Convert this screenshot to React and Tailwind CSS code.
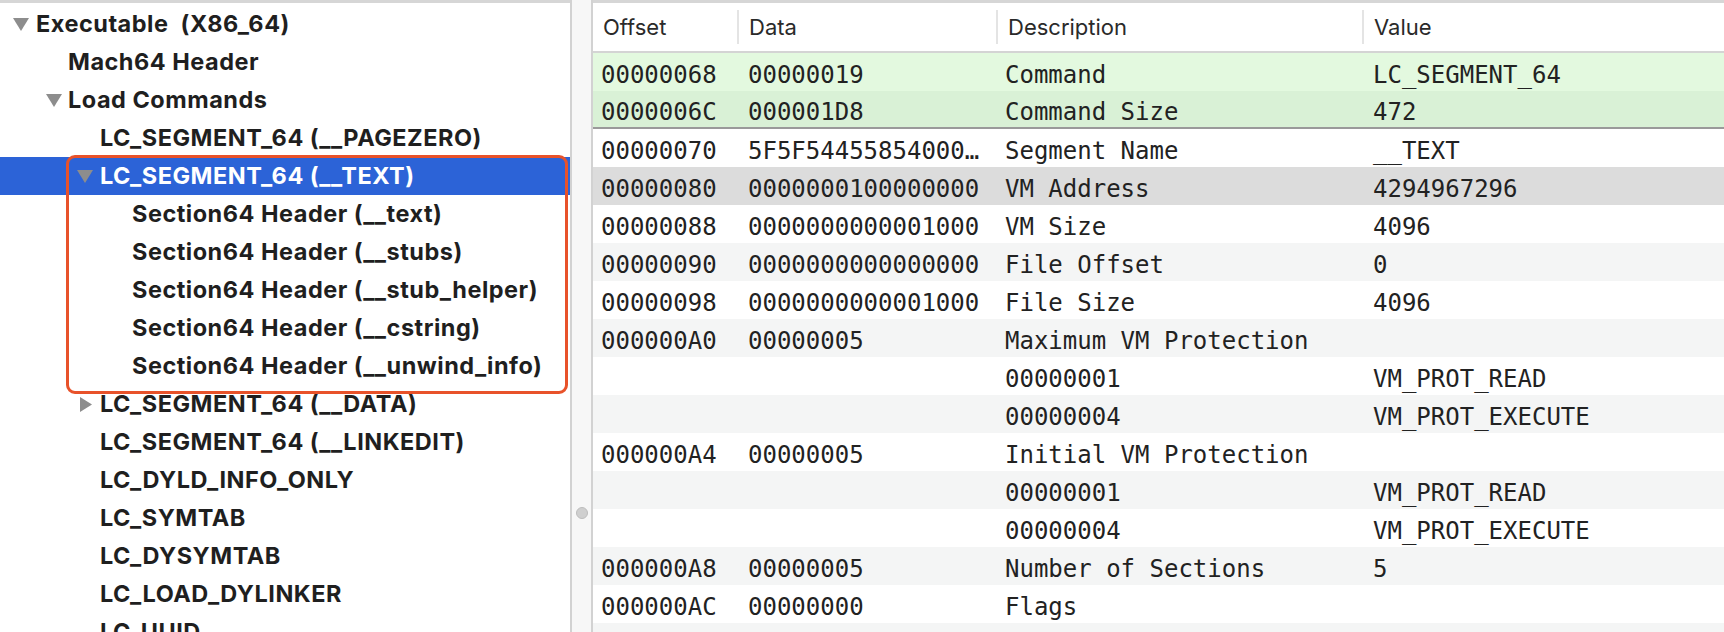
const tree = [
  { label: "Executable  (X86_64)", level: 0, toggle: "down" },
  { label: "Mach64 Header", level: 1 },
  { label: "Load Commands", level: 1, toggle: "down" },
  { label: "LC_SEGMENT_64 (__PAGEZERO)", level: 2 },
  { label: "LC_SEGMENT_64 (__TEXT)", level: 2, toggle: "down", selected: true },
  { label: "Section64 Header (__text)", level: 3 },
  { label: "Section64 Header (__stubs)", level: 3 },
  { label: "Section64 Header (__stub_helper)", level: 3 },
  { label: "Section64 Header (__cstring)", level: 3 },
  { label: "Section64 Header (__unwind_info)", level: 3 },
  { label: "LC_SEGMENT_64 (__DATA)", level: 2, toggle: "right" },
  { label: "LC_SEGMENT_64 (__LINKEDIT)", level: 2 },
  { label: "LC_DYLD_INFO_ONLY", level: 2 },
  { label: "LC_SYMTAB", level: 2 },
  { label: "LC_DYSYMTAB", level: 2 },
  { label: "LC_LOAD_DYLINKER", level: 2 },
  { label: "LC_UUID", level: 2 },
];

const rows = [
  { cells: ["00000068", "00000019", "Command", "LC_SEGMENT_64"], bg: "bg-[#e3f9df]" },
  { cells: ["0000006C", "000001D8", "Command Size", "472"], bg: "bg-[#d9f1d6] border-b-2 border-[#9a9a9a]" },
  { cells: ["00000070", "5F5F54455854000…", "Segment Name", "__TEXT"], bg: "bg-white" },
  { cells: ["00000080", "0000000100000000", "VM Address", "4294967296"], bg: "bg-[#dcdcdc]" },
  { cells: ["00000088", "0000000000001000", "VM Size", "4096"], bg: "bg-white" },
  { cells: ["00000090", "0000000000000000", "File Offset", "0"], bg: "bg-[#f4f5f5]" },
  { cells: ["00000098", "0000000000001000", "File Size", "4096"], bg: "bg-white" },
  { cells: ["000000A0", "00000005", "Maximum VM Protection", ""], bg: "bg-[#f4f5f5]" },
  { cells: ["", "", "00000001", "VM_PROT_READ"], bg: "bg-white" },
  { cells: ["", "", "00000004", "VM_PROT_EXECUTE"], bg: "bg-[#f4f5f5]" },
  { cells: ["000000A4", "00000005", "Initial VM Protection", ""], bg: "bg-white" },
  { cells: ["", "", "00000001", "VM_PROT_READ"], bg: "bg-[#f4f5f5]" },
  { cells: ["", "", "00000004", "VM_PROT_EXECUTE"], bg: "bg-white" },
  { cells: ["000000A8", "00000005", "Number of Sections", "5"], bg: "bg-[#f4f5f5]" },
  { cells: ["000000AC", "00000000", "Flags", ""], bg: "bg-white" },
  { cells: ["", "", "", ""], bg: "bg-[#f4f5f5]" },
];

const cols = ["w-[144px]", "w-[259px]", "w-[366px]", "flex-1"];

function Toggle({ dir }) {
  if (dir === "right") {
    return (
      <svg width="12" height="15" viewBox="0 0 12 15" className="shrink-0">
        <path d="M0 0 L12 7.5 L0 15 Z" fill="#8d8d8d" />
      </svg>
    );
  }
  return (
    <svg width="16" height="13" viewBox="0 0 16 13" className="shrink-0">
      <path d="M0 0 L16 0 L8 13 Z" fill="#8d8d8d" />
    </svg>
  );
}

function TreeRow({ label, level, toggle, selected }) {
  const pad = ["pl-[36px]", "pl-[68px]", "pl-[100px]", "pl-[132px]"][level];
  return (
    <div
      className={`relative h-[38px] flex items-center ${pad} ${
        selected ? "bg-[#2c63d7] text-white" : "text-[#1f1f1f]"
      }`}
    >
      {toggle && (
        <span
          className={`absolute top-0 h-full flex items-center ${
            ["left-[13px]", "left-[46px]", "left-[77px]", "left-[110px]"][level]
          } ${toggle === "right" ? "ml-[3px]" : ""}`}
        >
          <Toggle dir={toggle} />
        </span>
      )}
      <span className="whitespace-pre text-[23.5px] font-bold leading-none tracking-[0.5px]">{label}</span>
    </div>
  );
}

export default function App() {
  return (
    <div className="w-[1724px] h-[632px] flex bg-white overflow-hidden font-['Inter','Noto_Sans',sans-serif]">
      <div className="relative w-[570px] shrink-0 border-t-[3px] border-[#d6d6d6] pt-[2px]">
        {tree.map((t) => (
          <TreeRow key={t.label} {...t} />
        ))}
        <div className="absolute left-[66px] top-[152px] w-[502px] h-[239px] border-[3px] border-[#e8522a] rounded-[9px]" />
      </div>

      <div className="w-[23px] shrink-0 bg-[#f7f7f7] border-l-2 border-r-2 border-[#d2d2d2] flex flex-col items-center pt-[507px]">
        <div className="w-[12px] h-[12px] rounded-full bg-[#cfcfcf] border border-[#bdbdbd]" />
      </div>

      <div className="flex-1 flex flex-col border-t-[3px] border-[#d6d6d6]">
        <div className="h-[50px] shrink-0 flex items-center border-b-2 border-[#d4d4d4] text-[22px] text-[#2a2a2a]">
          {["Offset", "Data", "Description", "Value"].map((h, i) => (
            <div
              key={h}
              className={`${cols[i]} h-[34px] flex items-center pl-[10px] ${
                i > 0 ? "border-l-2 border-[#e4e4e4]" : ""
              }`}
            >
              {h}
            </div>
          ))}
        </div>
        <div className="font-['DejaVu_Sans_Mono',monospace] text-[24px] text-[#222]">
          {rows.map((r, idx) => (
            <div key={idx} className={`h-[38px] flex items-center pt-[5px] whitespace-pre ${r.bg}`}>
              {r.cells.map((c, i) => (
                <div key={i} className={`${cols[i]} ${i === 0 ? "pl-[8px]" : i === 2 ? "pl-[9px]" : "pl-[11px]"}`}>
                  {c}
                </div>
              ))}
            </div>
          ))}
        </div>
      </div>
    </div>
  );
}
